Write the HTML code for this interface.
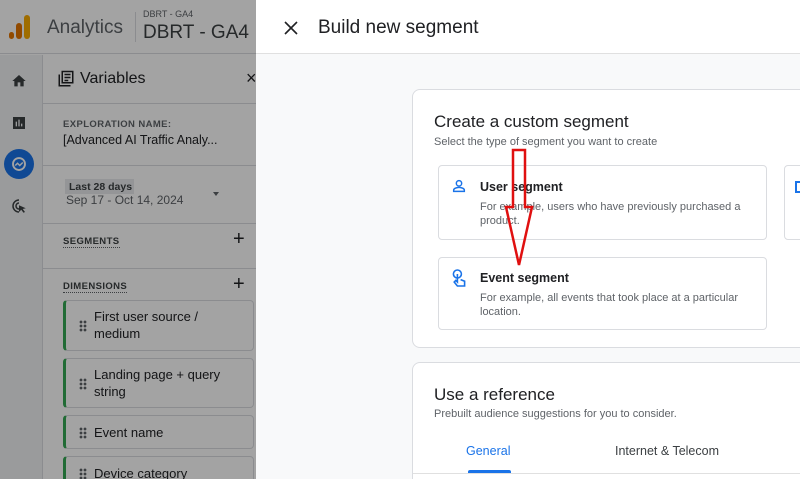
<!DOCTYPE html>
<html style="width:800px;height:479px;overflow:hidden"><head><style>
*{box-sizing:border-box;margin:0;padding:0}
body{width:800px;height:479px;overflow:hidden;font-family:"Liberation Sans",Arial,sans-serif;position:relative;background:#fff}
.abs{position:absolute}
.under{position:absolute;left:0;top:0;width:256px;height:479px;background:#fff;overflow:hidden}
.ov{position:absolute;left:0;top:0;width:256px;height:479px;background:rgba(0,0,0,0.36)}
.t{position:absolute;color:#202124;white-space:nowrap}
.dim{position:absolute;left:63px;width:191px;border:1px solid #dadce0;border-left:3px solid #34a853;border-radius:4px;background:#fff}
.dim .dots{position:absolute;left:13px;width:8px;height:12px;background:radial-gradient(circle,#5f6368 1.3px,transparent 1.5px) 0 0/4px 4px}
.dim span{position:absolute;left:28px;font-size:13px;color:#202124;line-height:17px}
.card{position:absolute;background:#fff;border:1px solid #dadce0;border-radius:8px}
.opt{position:absolute;background:#fff;border:1px solid #dadce0;border-radius:4px}
#wrap{position:absolute;left:0;top:0;width:800px;height:479px;overflow:hidden}
</style></head><body><div id="wrap">
<div class="under">
  <div class="abs" style="left:0;top:0;width:256px;height:54px;border-bottom:1px solid #dadce0"></div>
  <div class="abs" style="left:0;top:55px;width:43px;height:424px;background:#f1f3f4;border-right:1px solid #dadce0"></div>
  <div class="abs" style="left:9px;top:32px;width:5px;height:7px;border-radius:3px;background:#e37400"></div>
  <div class="abs" style="left:16px;top:23px;width:6px;height:16px;border-radius:3px;background:#e37400"></div>
  <div class="abs" style="left:24px;top:15px;width:6px;height:24px;border-radius:3px;background:#f9ab00"></div>
  <div class="t" style="left:47px;top:17px;font-size:19px;color:#5f6368">Analytics</div>
  <div class="abs" style="left:135px;top:12px;width:1px;height:30px;background:#dadce0"></div>
  <div class="t" style="left:143px;top:9px;font-size:9px;color:#5f6368">DBRT - GA4</div>
  <div class="t" style="left:143px;top:22px;font-size:19px;color:#3c4043">DBRT - GA4</div>
  <svg class="abs" style="left:11px;top:73px" width="16" height="16" viewBox="0 0 24 24"><path d="M10 20v-6h4v6h5v-8h3L12 3 2 12h3v8z" fill="#3c4043"/></svg>
  <svg class="abs" style="left:11px;top:115px" width="16" height="16" viewBox="0 0 24 24"><path d="M3 3h18v18H3z M7 10v7h2v-7z M11 7v10h2V7z M15 13v4h2v-4z" fill="#3c4043" fill-rule="evenodd"/></svg>
  <div class="abs" style="left:4px;top:149px;width:30px;height:30px;border-radius:50%;background:#1a73e8"></div>
  <svg class="abs" style="left:10px;top:155px" width="18" height="18" viewBox="0 0 24 24"><circle cx="12" cy="12" r="8" fill="none" stroke="#fff" stroke-width="2.5"/><path d="M7 14l3-3 3 3 4-4" fill="none" stroke="#fff" stroke-width="2"/></svg>
  <svg class="abs" style="left:10px;top:197px" width="18" height="18" viewBox="0 0 24 24"><path d="M12 4a8 8 0 1 0 0 16M12 8a4 4 0 1 0 0 8" fill="none" stroke="#3c4043" stroke-width="2"/><path d="M12 11l9 4-4 1 3 4-2 1-3-4-3 3z" fill="#3c4043"/></svg>
  <div class="abs" style="left:43px;top:103px;width:213px;height:1px;background:#dadce0"></div>
  <svg class="abs" style="left:57px;top:70px" width="18" height="18" viewBox="0 0 24 24"><path d="M3 6v15h15M7 2h14v15H7z M10 6h8M10 10h8M10 14h5" fill="none" stroke="#202124" stroke-width="2"/></svg>
  <div class="t" style="left:80px;top:70px;font-size:16px">Variables</div>
  <div class="t" style="left:246px;top:68px;font-size:18px">×</div>
  <div class="t" style="left:63px;top:119px;font-size:9.5px;font-weight:bold;color:#5f6368;letter-spacing:.4px">EXPLORATION NAME:</div>
  <div class="t" style="left:63px;top:133px;font-size:12.5px">[Advanced AI Traffic Analy...</div>
  <div class="abs" style="left:43px;top:165px;width:213px;height:1px;background:#dadce0"></div>
  <div class="abs" style="left:65px;top:179px;width:69px;height:15px;background:#e8eaed"></div>
  <div class="t" style="left:69px;top:181px;font-size:10.5px;font-weight:bold;color:#3c4043">Last 28 days</div>
  <div class="t" style="left:66px;top:193px;font-size:12px;color:#5f6368">Sep 17 - Oct 14, 2024</div>
  <div class="abs" style="left:213px;top:192px;border:3.5px solid transparent;border-top:4px solid #5f6368"></div>
  <div class="abs" style="left:43px;top:223px;width:213px;height:1px;background:#dadce0"></div>
  <div class="t" style="left:63px;top:236px;font-size:9.5px;font-weight:bold;color:#3c4043;letter-spacing:.4px;border-bottom:1px dotted #5f6368">SEGMENTS</div>
  <div class="t" style="left:233px;top:228px;font-size:20px">+</div>
  <div class="abs" style="left:43px;top:268px;width:213px;height:1px;background:#dadce0"></div>
  <div class="t" style="left:63px;top:281px;font-size:9.5px;font-weight:bold;color:#3c4043;letter-spacing:.4px;border-bottom:1px dotted #5f6368">DIMENSIONS</div>
  <div class="t" style="left:233px;top:273px;font-size:20px">+</div>
  <div class="dim" style="top:300px;height:51px"><div class="dots" style="top:19px"></div><span style="top:7px">First user source /<br>medium</span></div>
  <div class="dim" style="top:358px;height:50px"><div class="dots" style="top:19px"></div><span style="top:7px">Landing page + query<br>string</span></div>
  <div class="dim" style="top:415px;height:34px"><div class="dots" style="top:11px"></div><span style="top:8px">Event name</span></div>
  <div class="dim" style="top:456px;height:34px"><div class="dots" style="top:11px"></div><span style="top:8px">Device category</span></div>
</div>
<div class="ov"></div>

<div class="abs" style="left:256px;top:0;width:544px;height:479px;background:#f8f9fa"></div>
<div class="abs" style="left:256px;top:0;width:544px;height:54px;background:#fff;border-bottom:1px solid #e0e0e0"></div>
<svg class="abs" style="left:284px;top:21px" width="14" height="14" viewBox="0 0 14 14"><path d="M1 1l12 12M13 1L1 13" stroke="#202124" stroke-width="1.6"/></svg>
<div class="t" style="left:318px;top:17px;font-size:19px">Build new segment</div>

<div class="card" style="left:412px;top:89px;width:400px;height:259px">
  <div class="t" style="left:21px;top:22px;font-size:17px">Create a custom segment</div>
  <div class="t" style="left:21px;top:46px;font-size:11px;color:#5f6368">Select the type of segment you want to create</div>
</div>
<div class="opt" style="left:438px;top:165px;width:329px;height:75px">
  <svg class="abs" style="left:12px;top:12px" width="16" height="16" viewBox="0 0 24 24"><circle cx="12" cy="8" r="4" fill="none" stroke="#1a73e8" stroke-width="2.2"/><path d="M4 20v-2c0-2 4-4 8-4s8 2 8 4v2z" fill="none" stroke="#1a73e8" stroke-width="2.2"/></svg>
  <div class="t" style="left:41px;top:14px;font-size:12.5px;font-weight:600">User segment</div>
  <div class="t" style="left:41px;top:34px;font-size:11px;color:#5f6368;line-height:14px">For example, users who have previously purchased a<br>product.</div>
</div>
<div class="opt" style="left:784px;top:165px;width:30px;height:75px"><div class="abs" style="left:10px;top:15px;width:8px;height:12px;border:2px solid #1a73e8"></div></div>
<div class="opt" style="left:438px;top:257px;width:329px;height:73px">
  <svg class="abs" style="left:12px;top:10px" width="16" height="20" viewBox="0 0 20 24"><circle cx="8" cy="7" r="5" fill="none" stroke="#1a73e8" stroke-width="2"/><path d="M8 7v10l-2-2-2 2 4 5h9v-6l-5-2" fill="none" stroke="#1a73e8" stroke-width="2"/></svg>
  <div class="t" style="left:41px;top:13px;font-size:12.5px;font-weight:600">Event segment</div>
  <div class="t" style="left:41px;top:33px;font-size:11px;color:#5f6368;line-height:14px">For example, all events that took place at a particular<br>location.</div>
</div>

<div class="card" style="left:412px;top:362px;width:400px;height:130px">
  <div class="t" style="left:21px;top:22px;font-size:17px">Use a reference</div>
  <div class="t" style="left:21px;top:45px;font-size:11px;color:#5f6368">Prebuilt audience suggestions for you to consider.</div>
  <div class="t" style="left:53px;top:81px;font-size:12.5px;color:#1a73e8">General</div>
  <div class="abs" style="left:55px;top:107px;width:43px;height:3px;background:#1a73e8;border-radius:2px 2px 0 0"></div>
  <div class="t" style="left:202px;top:81px;font-size:12.5px;color:#3c4043">Internet &amp; Telecom</div>
  <div class="abs" style="left:0;top:110px;width:400px;height:1px;background:#e0e0e0"></div>
</div>

<svg class="abs" style="left:0;top:0" width="800" height="479"><path d="M513 150H525V207H532L519 265L506 207H513Z" fill="none" stroke="#e01010" stroke-width="2.5"/></svg>
</div></body></html>
